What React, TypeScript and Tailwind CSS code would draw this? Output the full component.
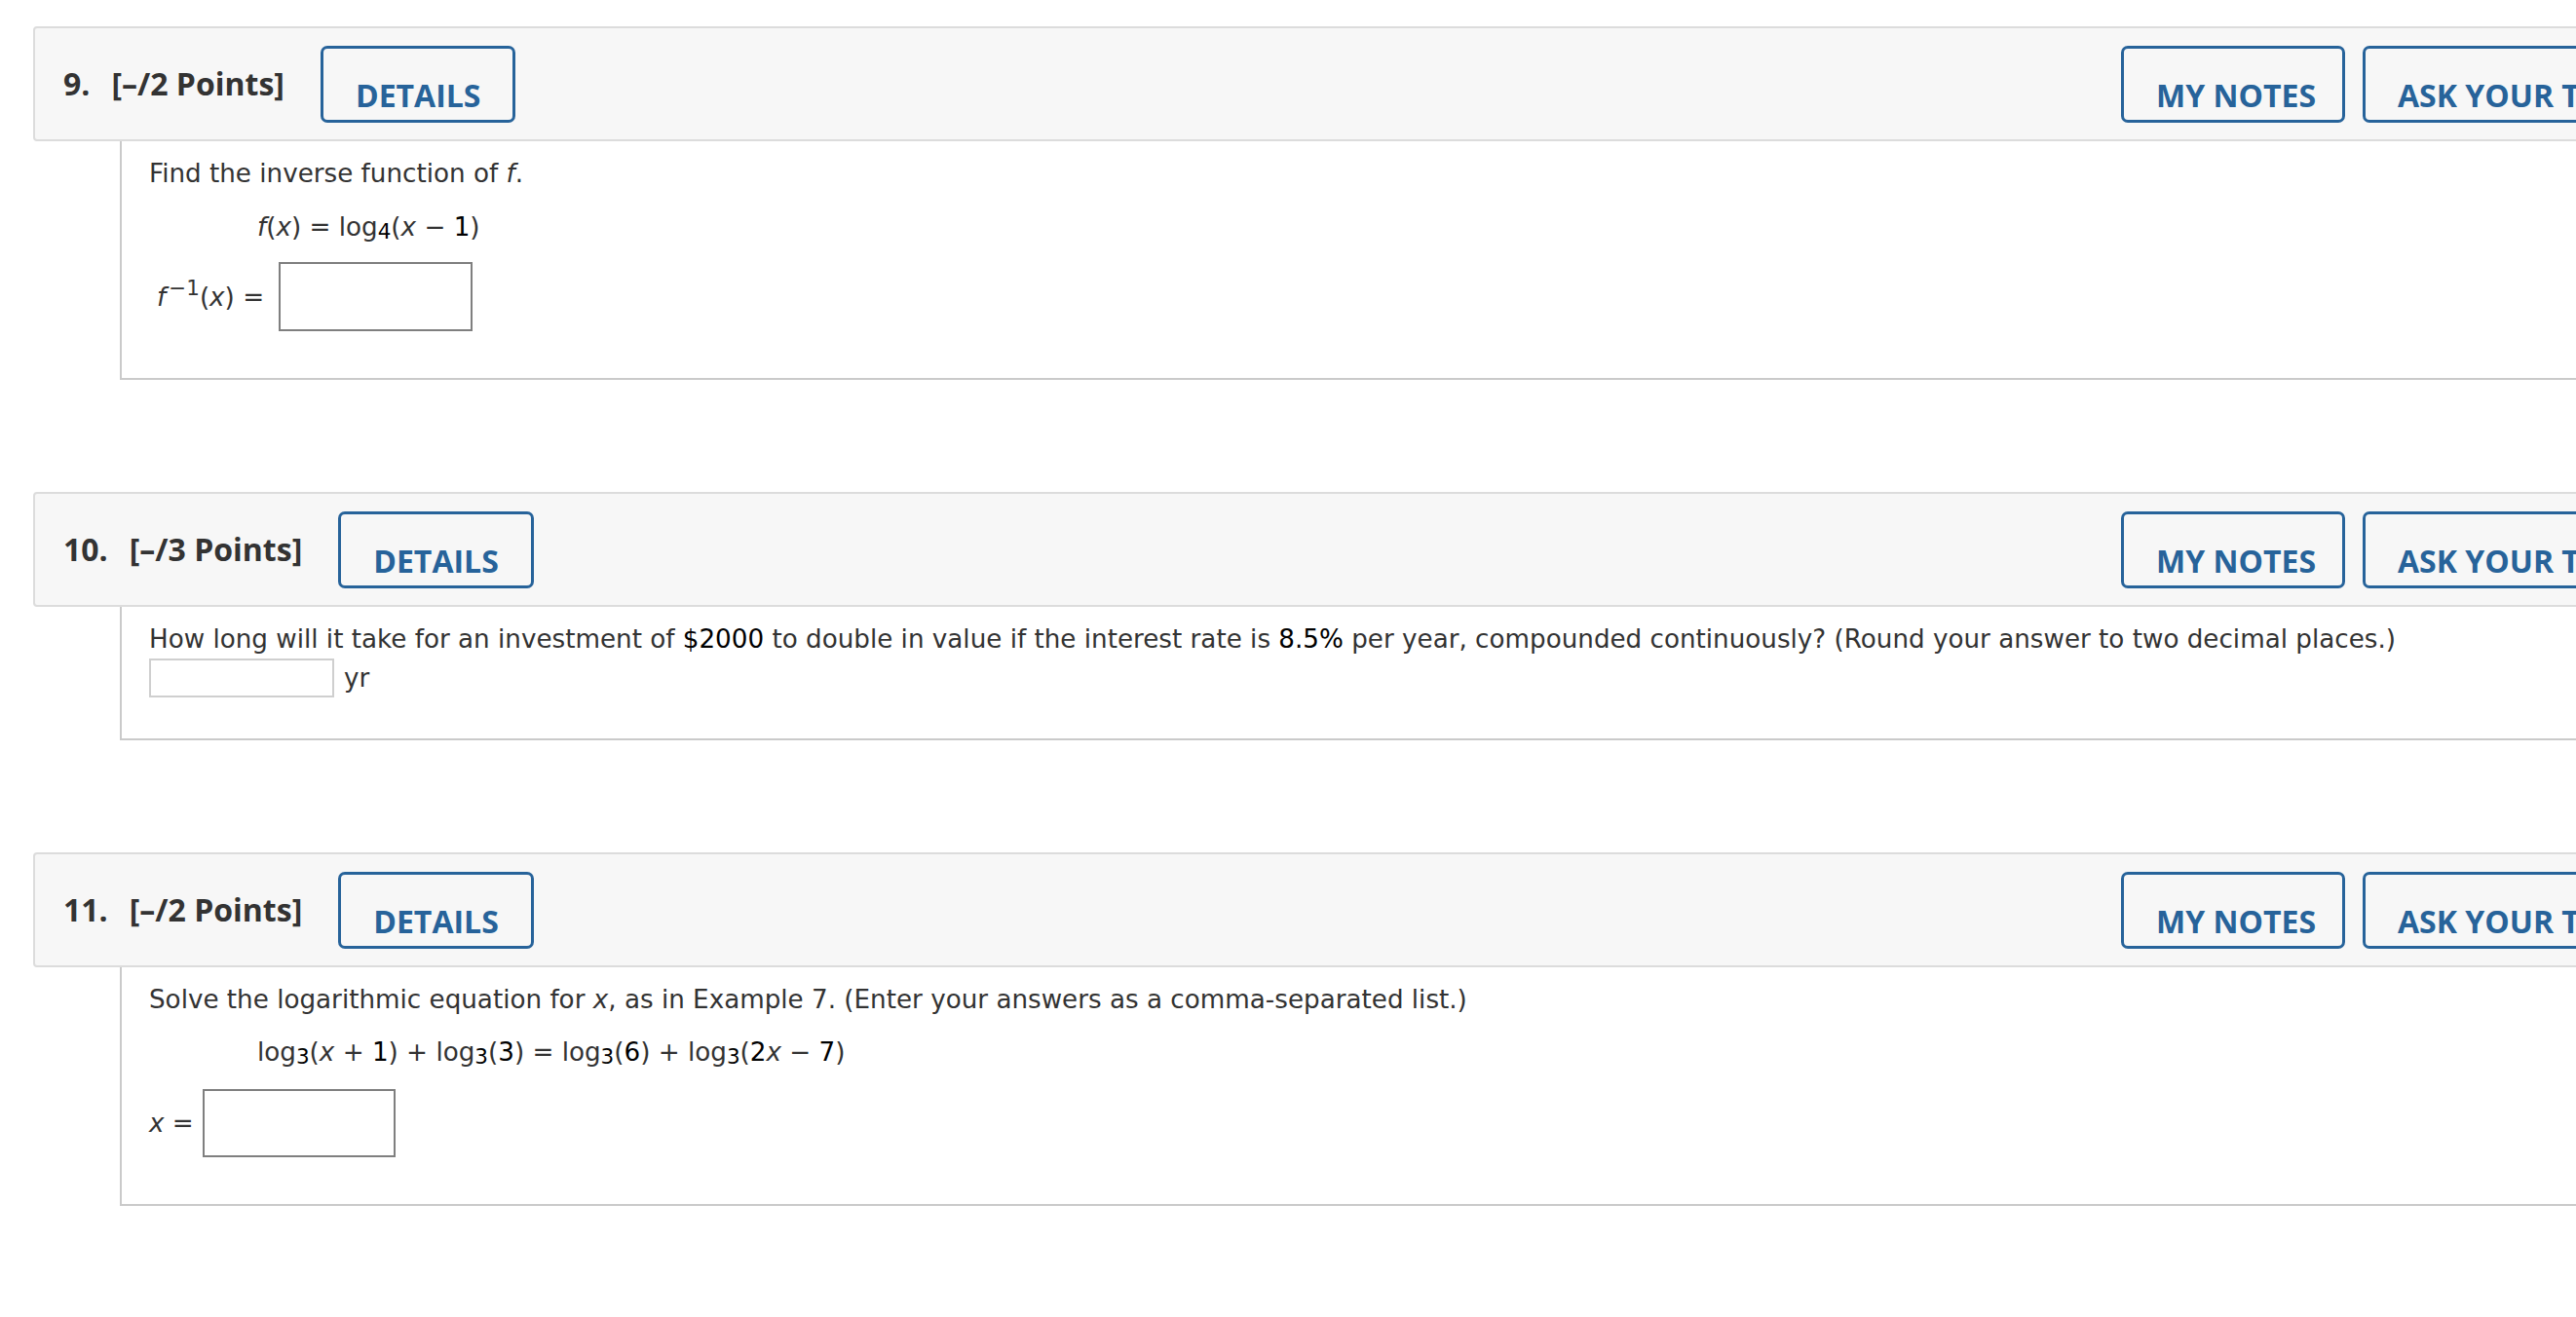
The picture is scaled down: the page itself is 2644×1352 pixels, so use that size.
import React from "react";

type Section = {
  num: string;
  points: string;
  body: React.ReactNode;
};

const N = ({ children }: { children: React.ReactNode }) => <span className="text-black">{children}</span>;
const I = ({ children }: { children: React.ReactNode }) => <i className="italic">{children}</i>;
const Sub = ({ children }: { children: React.ReactNode }) => (
  <sub className="relative top-[0.14em] align-baseline text-[0.82em] text-black">{children}</sub>
);

function OutlineButton({ label, w }: { label: string; w?: string }) {
  return (
    <button
      className={`box-border h-[79px] shrink-0 whitespace-nowrap rounded-[7px] border-[3px] border-[#27639a] bg-[#f7f7f7] px-[33px] pt-[26px] pb-[4px] font-['Open_Sans',sans-serif] text-[32px] font-bold leading-[44px] text-[#27639a] ${w ?? ""}`}
    >
      {label}
    </button>
  );
}

function Header({ num, points }: { num: string; points: string }) {
  return (
    <div className="box-border flex h-[118px] items-center rounded-[4px] border-2 border-[#dcdcdc] bg-[#f7f7f7] pl-[29px] pr-[20px]">
      <div className="flex items-center gap-[22px] font-['Open_Sans',sans-serif] text-[32px] font-bold text-[#333]">
        <span>{num}</span>
        <span>{points}</span>
      </div>
      <div className="ml-[37px]">
        <OutlineButton label="DETAILS" />
      </div>
      <div className="ml-auto flex gap-[18px]">
        <OutlineButton label="MY NOTES" w="w-[230px]" />
        <OutlineButton label="ASK YOUR TEACHER" w="w-[388px] text-left" />
      </div>
    </div>
  );
}

function Body({ children, pb }: { children: React.ReactNode; pb: string }) {
  return (
    <div
      className={`ml-[89px] border-b-2 border-l-2 border-[#cacaca] bg-white pl-[28px] pt-[18px] font-['DejaVu_Sans',Verdana,sans-serif] text-[26.2px] leading-[30px] text-[#333] ${pb}`}
    >
      {children}
    </div>
  );
}

const AnswerBox = ({ w, h }: { w: string; h: string }) => (
  <div className={`box-border border-2 border-[#7f7f7f] bg-white ${w} ${h}`} />
);

export default function App() {
  const sections: Section[] = [
    {
      num: "9.",
      points: "[–/2 Points]",
      body: (
        <Body pb="pb-[48px]">
          <p>
            Find the inverse function of <I>f</I>.
          </p>
          <p className="ml-[111px] mt-[25px]">
            <I>f</I>(<I>x</I>) = log<Sub>4</Sub>(<I>x</I> − <N>1</N>)
          </p>
          <div className="mt-[21px] flex items-center gap-[15px]">
            <span className="pl-[8px]">
              <I>f</I>
              <sup className="relative -top-[0.5em] ml-[3px] align-baseline text-[0.82em]">−1</sup>(<I>x</I>) =
            </span>
            <AnswerBox w="w-[199px]" h="h-[71px]" />
          </div>
        </Body>
      ),
    },
    {
      num: "10.",
      points: "[–/3 Points]",
      body: (
        <Body pb="pb-[42px]">
          <p>
            How long will it take for an investment of <N>$2000</N> to double in value if the interest rate is{" "}
            <N>8.5%</N> per year, compounded continuously? (Round your answer to two decimal places.)
          </p>
          <div className="mt-[5px] flex items-center gap-[10px]">
            <div className="box-border h-[40px] w-[190px] border-2 border-[#cfcfcf] bg-white" />
            <span>yr</span>
          </div>
        </Body>
      ),
    },
    {
      num: "11.",
      points: "[–/2 Points]",
      body: (
        <Body pb="pb-[48px]">
          <p>
            Solve the logarithmic equation for <I>x</I>, as in Example 7. (Enter your answers as a comma-separated list.)
          </p>
          <p className="ml-[111px] mt-[24px]">
            log<Sub>3</Sub>(<I>x</I> + <N>1</N>) + log<Sub>3</Sub>(<N>3</N>) = log<Sub>3</Sub>(<N>6</N>) + log
            <Sub>3</Sub>(<N>2</N>
            <I>x</I> − <N>7</N>)
          </p>
          <div className="mt-[23px] flex items-center gap-[9px]">
            <span>
              <I>x</I> =
            </span>
            <AnswerBox w="w-[198px]" h="h-[70px]" />
          </div>
        </Body>
      ),
    },
  ];

  return (
    <div className="h-[1352px] w-full overflow-hidden bg-white">
      <div className="box-content flex w-[2801px] flex-col gap-[115px] pl-[34px] pt-[27px]">
        {sections.map((s) => (
          <div key={s.num}>
            <Header num={s.num} points={s.points} />
            {s.body}
          </div>
        ))}
      </div>
    </div>
  );
}
